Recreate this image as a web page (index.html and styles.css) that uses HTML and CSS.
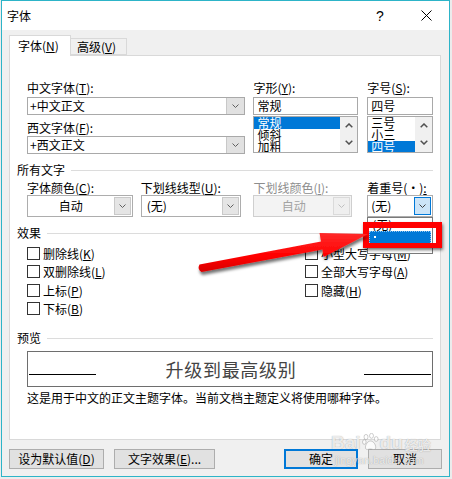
FILE: index.html
```html
<!DOCTYPE html>
<html lang="zh">
<head>
<meta charset="utf-8">
<title>字体</title>
<link rel="stylesheet" href="styles.css">
</head>
<body>
<div class="window">
  <div class="titlebar">
    <span class="title">字体</span>
    <span class="capbtn help">?</span>
    <span class="capbtn close"><svg width="11" height="11" viewBox="0 0 11 11"><path d="M0.5 0.5L10.5 10.5M10.5 0.5L0.5 10.5" stroke="#000" stroke-width="1" fill="none"/></svg></span>
  </div>
  <div class="client">
    <div class="tabs">
      <div class="tab active">字体(<u>N</u>)</div>
      <div class="tab">高级(<u>V</u>)</div>
    </div>
    <div class="panel">
      <div class="fontgrid">
        <div class="col c1">
          <div class="lbl">中文字体(<u>T</u>):</div>
          <div class="combo edit"><span class="val">+中文正文</span><span class="ddbtn"><svg width="7" height="4" viewBox="0 0 7 4"><polyline points="0.5,0.5 3.5,3.5 6.5,0.5" fill="none" stroke="#606060"/></svg></span></div>
          <div class="lbl l2">西文字体(<u>F</u>):</div>
          <div class="combo edit second"><span class="val">+西文正文</span><span class="ddbtn"><svg width="7" height="4" viewBox="0 0 7 4"><polyline points="0.5,0.5 3.5,3.5 6.5,0.5" fill="none" stroke="#606060"/></svg></span></div>
        </div>
        <div class="col c2">
          <div class="lbl">字形(<u>Y</u>):</div>
          <div class="textbox">常规</div>
          <div class="listbox">
            <div class="items">
              <div class="item sel">常规</div>
              <div class="item">倾斜</div>
              <div class="item">加粗</div>
            </div>
            <div class="vscroll">
              <svg width="8" height="5" viewBox="0 0 8 5"><polyline points="0.7,4.3 4,1 7.3,4.3" fill="none" stroke="#505050" stroke-width="1.5"/></svg>
              <svg width="8" height="5" viewBox="0 0 8 5"><polyline points="0.7,0.7 4,4 7.3,0.7" fill="none" stroke="#505050" stroke-width="1.5"/></svg>
            </div>
          </div>
        </div>
        <div class="col c3">
          <div class="lbl">字号(<u>S</u>):</div>
          <div class="textbox">四号</div>
          <div class="listbox">
            <div class="items">
              <div class="item">三号</div>
              <div class="item">小三</div>
              <div class="item sel short">四号</div>
            </div>
            <div class="vscroll">
              <svg width="8" height="5" viewBox="0 0 8 5"><polyline points="0.7,4.3 4,1 7.3,4.3" fill="none" stroke="#505050" stroke-width="1.5"/></svg>
              <svg width="8" height="5" viewBox="0 0 8 5"><polyline points="0.7,0.7 4,4 7.3,0.7" fill="none" stroke="#505050" stroke-width="1.5"/></svg>
            </div>
          </div>
        </div>
      </div>

      <div class="group g1">所有文字</div>
      <div class="fields">
        <div class="field f1">
          <div class="lbl">字体颜色(<u>C</u>):</div>
          <div class="combo drop"><span class="val center">自动</span><span class="ddbtn"><svg width="7" height="4" viewBox="0 0 7 4"><polyline points="0.5,0.5 3.5,3.5 6.5,0.5" fill="none" stroke="#606060"/></svg></span></div>
        </div>
        <div class="field f2">
          <div class="lbl">下划线线型(<u>U</u>):</div>
          <div class="combo drop"><span class="val pad">(无)</span><span class="ddbtn"><svg width="7" height="4" viewBox="0 0 7 4"><polyline points="0.5,0.5 3.5,3.5 6.5,0.5" fill="none" stroke="#606060"/></svg></span></div>
        </div>
        <div class="field f3">
          <div class="lbl disabled">下划线颜色(<u>I</u>):</div>
          <div class="combo drop off"><span class="val center">自动</span><span class="ddbtn"><svg width="7" height="4" viewBox="0 0 7 4"><polyline points="0.5,0.5 3.5,3.5 6.5,0.5" fill="none" stroke="#c0c0c0"/></svg></span></div>
        </div>
        <div class="field f4">
          <div class="lbl">着重号(·)<u>:</u></div>
          <div class="combo drop hot"><span class="val pad4">(无)</span><span class="ddbtn"><svg width="7" height="4" viewBox="0 0 7 4"><polyline points="0.5,0.5 3.5,3.5 6.5,0.5" fill="none" stroke="#404040"/></svg></span></div>
          <div class="droplist">
            <div class="ditem">(无)</div>
            <div class="ditem dsel"><span class="dot"></span></div>
          </div>
        </div>
      </div>

      <div class="group g2">效果</div>
      <div class="effects">
        <div class="ecol">
          <div class="check"><span class="box"></span>删除线(<u>K</u>)</div>
          <div class="check"><span class="box"></span>双删除线(<u>L</u>)</div>
          <div class="check"><span class="box"></span>上标(<u>P</u>)</div>
          <div class="check"><span class="box"></span>下标(<u>B</u>)</div>
        </div>
        <div class="ecol right">
          <div class="check"><span class="box"></span>小型大写字母(<u>M</u>)</div>
          <div class="check"><span class="box"></span>全部大写字母(<u>A</u>)</div>
          <div class="check"><span class="box"></span>隐藏(<u>H</u>)</div>
        </div>
      </div>

      <div class="group g3">预览</div>
      <div class="preview">
        <span class="pline"></span>
        <span class="ptext">升级到最高级别</span>
        <span class="pline"></span>
      </div>
      <div class="desc">这是用于中文的正文主题字体。当前文档主题定义将使用哪种字体。</div>
    </div>

    <div class="buttons">
      <div class="btn b1">设为默认值(<u>D</u>)</div>
      <div class="btn b2">文字效果(<u>E</u>)...</div>
      <div class="btn ok">确定</div>
      <div class="btn cancel">取消</div>
    </div>
  </div>

  <div class="redbox"></div>

  <svg class="arrow" width="447" height="475" viewBox="2 1 447 475">
    <defs>
      <filter id="sh" x="-20%" y="-50%" width="140%" height="200%">
        <feDropShadow dx="1" dy="3" stdDeviation="1.6" flood-color="#000" flood-opacity="0.55"/>
      </filter>
      <linearGradient id="rg" x1="0" y1="0" x2="0" y2="1">
        <stop offset="0" stop-color="#ff2a2a"/>
        <stop offset="0.6" stop-color="#ff0000"/>
        <stop offset="1" stop-color="#d80000"/>
      </linearGradient>
    </defs>
    <g filter="url(#sh)">
      <path d="M199.5 264.5 L321 241.5 L319.5 233 L368 234 L323.5 257 L322.5 249.5 L201.5 272 Q197 269 199.5 264.5 Z" fill="url(#rg)"/>
    </g>
  </svg>

  <div class="watermark">
    <div class="wm-top">
      <span class="wm-bai">Bai</span>
      <svg class="paw" width="17" height="18" viewBox="0 0 17 18"><g fill="rgba(255,255,255,0.75)" stroke="rgba(120,120,120,0.45)" stroke-width="0.8"><ellipse cx="4" cy="4" rx="2" ry="2.6"/><ellipse cx="9.5" cy="2.8" rx="2" ry="2.5"/><ellipse cx="14.2" cy="6" rx="1.9" ry="2.4"/><ellipse cx="2.3" cy="9" rx="1.8" ry="2.3"/><path d="M8.5 8 C12 8 14.5 13 13.5 15.5 C12.5 17.5 10 16 8.5 16 C6.5 16 4 17.5 3.5 15 C3 12.5 5.5 8 8.5 8 Z"/></g></svg>
      <span class="wm-du">du</span>
      <span class="wm-jy">经验</span>
    </div>
    <div class="wm-url">jingyan.baidu.com</div>
  </div>
</div>
</body>
</html>
```

FILE: styles.css
```css
* { box-sizing: border-box; }
html, body { margin: 0; padding: 0; }
body {
  width: 452px;
  height: 479px;
  overflow: hidden;
  background: #ececec;
  font-family: "Noto Sans CJK SC", "Noto Sans", sans-serif;
  font-size: 12px;
  color: #000;
}
u { text-decoration: underline; text-underline-offset: 1px; }

.window {
  position: relative;
  margin-left: 1px;
  width: 449px;
  height: 477px;
  border: 1px solid #2db4c8;
  background: #f0f0f0;
}

/* title bar */
.titlebar {
  height: 29px;
  background: #fff;
  display: flex;
  align-items: center;
}
.title { margin-left: 5px; line-height: 29px; }
.capbtn {
  width: 46px;
  height: 29px;
  display: flex;
  align-items: center;
  justify-content: center;
}
.help { margin-left: auto; font-family: "Liberation Sans", sans-serif; font-size: 14px; }

/* tabs */
.tabs {
  height: 25px;
  display: flex;
  align-items: flex-end;
  padding-left: 7px;
}
.tab {
  height: 17px;
  width: 56px;
  padding-left: 6px;
  line-height: 16px;
  border: 1px solid #d9d9d9;
  border-left: none;
  background: #f0f0f0;
}
.tab.active {
  position: relative;
  z-index: 1;
  width: 62px;
  height: 21px;
  margin-bottom: -1px;
  padding-left: 8px;
  line-height: 19px;
  border-left: 1px solid #d9d9d9;
  border-bottom: none;
  background: #fff;
}

/* panel */
.panel {
  margin-left: 7px;
  width: 432px;
  height: 385px;
  background: #fff;
  border: 1px solid #d9d9d9;
  padding: 25px 7px 0 7px;
}
.lbl { height: 14px; line-height: 14px; white-space: nowrap; }
.lbl.disabled { color: #8d8d8d; }

.fontgrid { display: flex; margin-left: 10px; }
.c1 { width: 219px; margin-right: 8px; }
.c2 { width: 105px; margin-right: 9px; }
.c3 { width: 66px; }

.combo {
  position: relative;
  display: flex;
  align-items: center;
  background: #fff;
  border: 1px solid #a9a9a9;
  white-space: nowrap;
}
.combo .val { flex: 1; line-height: 14px; }
.combo.edit { height: 18px; margin-top: 2px; }
.combo.edit .val { padding-left: 2px; }
.combo.edit.second { margin-top: 1px; }
.lbl.l2 { margin-top: 6px; }
.combo.edit .ddbtn {
  width: 18px;
  height: 16px;
  background: #e1e1e1;
  border-left: 1px solid #c8c8c8;
  display: flex;
  align-items: center;
  justify-content: center;
}

.textbox {
  margin-top: 2px;
  height: 18px;
  border: 1px solid #a9a9a9;
  padding-left: 3px;
  line-height: 16px;
}
.listbox {
  margin-top: 1px;
  height: 37px;
  border: 1px solid #a9a9a9;
  display: flex;
  overflow: hidden;
}
.items { flex: 1; overflow: hidden; }
.item { height: 12px; line-height: 12px; padding-left: 3px; }
.item.sel { background: #0078d7; color: #fff; }
.vscroll {
  width: 17px;
  background: #f0f0f0;
  display: flex;
  flex-direction: column;
  align-items: center;
  justify-content: space-between;
  padding: 6px 0 7px;
}

/* group headers */
.group {
  display: flex;
  align-items: center;
  height: 14px;
  line-height: 14px;
  white-space: nowrap;
}
.group::after {
  content: "";
  flex: 1;
  margin-left: 6px;
  border-top: 1px solid #dcdcdc;
}
.g1 { margin-top: 9px; }
.g2 { margin-top: 9px; }
.g3 { margin-top: 13px; }

/* field row */
.fields { display: flex; margin-left: 10px; margin-top: 4px; }
.field { position: relative; }
.f1 { width: 106px; margin-right: 8px; }
.f2 { width: 101px; margin-right: 12px; }
.f3 { width: 99px; margin-right: 15px; }
.f4 { width: 66px; }
.combo.drop { height: 22px; border-color: #adadad; }
.combo.drop .val.center { text-align: center; }
.combo.drop .val.pad { padding-left: 5px; }
.combo.drop .val.pad4 { padding-left: 3px; }
.combo.drop .ddbtn {
  width: 17px;
  height: 18px;
  margin-right: 1px;
  background: #e5e5e5;
  border: 1px solid #c9c9c9;
  display: flex;
  align-items: center;
  justify-content: center;
}
.combo.drop.off { background: #f3f3f3; border-color: #cfcfcf; color: #a3a3a3; }
.combo.drop.off .ddbtn { background: #efefef; border-color: #dadada; }
.combo.drop.hot .ddbtn { background: #cce4f7; border-color: #0078d7; }

.droplist {
  position: absolute;
  left: 0;
  top: 36px;
  width: 66px;
  height: 37px;
  background: #fff;
  border: 1px solid #7a7a7a;
  padding: 1px 1px 0;
}
.ditem { height: 12px; line-height: 12px; padding-left: 3px; }
.ditem.dsel {
  height: 14px;
  background: #0078d7;
  border: 1px dotted #8fc4f0;
  position: relative;
}
.dot {
  position: absolute;
  left: 4px;
  top: 4px;
  width: 2px;
  height: 2px;
  background: #fff;
}

/* effects */
.effects { display: flex; margin-left: 10px; margin-top: 4px; }
.ecol { width: 278px; }
.ecol.right { width: auto; }
.check {
  height: 18.5px;
  display: flex;
  align-items: center;
  white-space: nowrap;
}
.box {
  width: 13px;
  height: 13px;
  border: 1px solid #333;
  background: #fff;
  margin-right: 3px;
  flex: none;
}

/* preview */
.preview {
  margin-top: 6px;
  margin-left: 10px;
  width: 406px;
  height: 36px;
  border: 1px solid #6e6e6e;
  display: flex;
  align-items: center;
  justify-content: space-between;
  padding: 0 1px;
}
.pline {
  width: 67px;
  height: 1px;
  background: #000;
  margin-top: 11px;
}
.ptext {
  font-size: 18px;
  color: #444;
  letter-spacing: 0.7px;
  line-height: 20px;
  margin-left: 2px;
}
.desc { margin-top: 4px; margin-left: 10px; height: 14px; line-height: 14px; white-space: nowrap; }

/* buttons */
.buttons {
  display: flex;
  margin-top: 9px;
  padding: 0 7px;
}
.btn {
  height: 20px;
  background: #e1e1e1;
  border: 1px solid #adadad;
  display: flex;
  align-items: center;
  justify-content: center;
  line-height: 14px;
  white-space: nowrap;
}
.b1 { width: 95px; }
.b2 { width: 101px; margin-left: 10px; }
.ok { width: 74px; margin-left: auto; border: 2px solid #0078d7; }
.cancel { width: 74px; margin-left: 10px; }

/* overlays */
.redbox {
  position: absolute;
  left: 361px;
  top: 221px;
  width: 79px;
  height: 26px;
  border: 6px solid #ff0000;
  border-bottom-width: 5px;
  box-shadow: 1px 2px 3px rgba(0,0,0,0.55);
}
.arrow {
  position: absolute;
  left: 0;
  top: 0;
  pointer-events: none;
}
.watermark {
  position: absolute;
  left: 329px;
  top: 432px;
  width: 100px;
  color: rgba(255,255,255,0.8);
  text-shadow: 0 0 1px rgba(90,90,90,0.6);
  pointer-events: none;
}
.wm-top { display: flex; align-items: flex-end; height: 20px; }
.wm-bai, .wm-du {
  font-family: "Liberation Sans", sans-serif;
  font-weight: bold;
  font-size: 19px;
  line-height: 20px;
}
.paw { margin: 0 1px 2px; }
.wm-jy { font-size: 13px; line-height: 16px; margin-left: 2px; font-weight: bold; }
.wm-url {
  font-family: "Liberation Sans", sans-serif;
  font-size: 11px;
  line-height: 12px;
  margin-top: 1px;
  margin-left: 4px;
}
```
